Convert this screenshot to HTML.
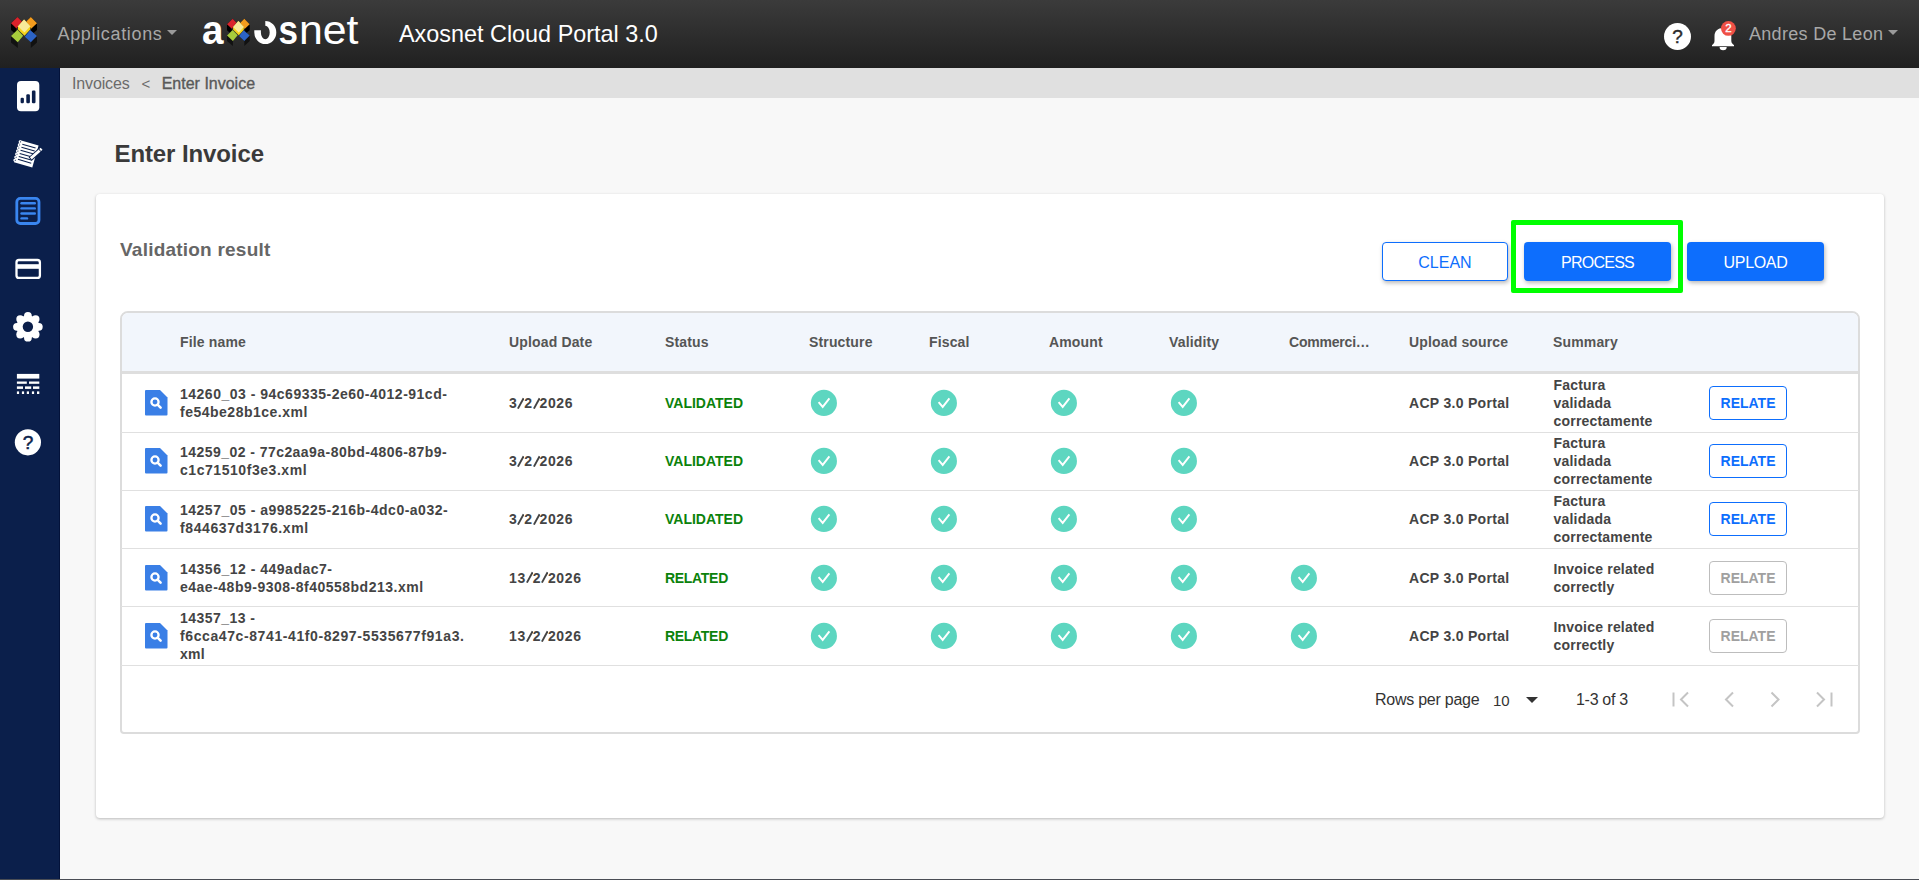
<!DOCTYPE html>
<html><head><meta charset="utf-8">
<style>
*{box-sizing:border-box;margin:0;padding:0}
html,body{width:1919px;height:880px;overflow:hidden}
body{position:relative;background:#f8f8f8;font-family:"Liberation Sans",sans-serif;color:#333}
.a{position:absolute;white-space:nowrap}
#hdr{position:absolute;left:0;top:0;width:1919px;height:68px;background:linear-gradient(#3b3b3b,#202020)}
#side{position:absolute;left:0;top:68px;width:60px;height:812px;background:#0b1f4b}
#crumb{position:absolute;left:60px;top:68px;width:1859px;height:30px;background:#e0e0e0}
#card{position:absolute;left:96px;top:194px;width:1788px;height:624px;background:#fff;border-radius:4px;box-shadow:0 1px 3px rgba(0,0,0,.25)}
.btn{position:absolute;top:242px;height:39px;border-radius:4px;font-size:16px;line-height:41px;text-align:center;box-shadow:1px 2px 4px rgba(0,0,0,.28)}
.bp{background:#0d6efd;color:#fff}
.bo{background:#fff;color:#0d6efd;border:1px solid #0d6efd;line-height:39px}
#tbl{position:absolute;left:121px;top:311px;width:1738px;height:422px;border:1.5px solid #dcdcdc;border-radius:8px;overflow:hidden;background:#fff}
.th{position:absolute;font-size:14px;font-weight:700;color:#555;white-space:nowrap}
.td{position:absolute;font-size:14px;font-weight:700;color:#444;white-space:nowrap;line-height:18px}
.ok{position:absolute;width:26px;height:26px;border-radius:50%;background:#5dd6bf}
.rel{position:absolute;left:1709px;width:78px;height:34px;border:1px solid #0d6efd;border-radius:4px;color:#0d6efd;font-size:14px;font-weight:700;line-height:32px;text-align:center}
.rel.dis{border-color:#bdbdbd;color:#a0a0a0}
.hr{position:absolute;left:121px;width:1738px;height:1px;background:#e0e0e0}
</style></head><body>
<div id="hdr"></div>
<div id="side"></div>
<svg class="a" style="left:0;top:68px" width="60" height="420" viewBox="0 68 60 420">
 <rect x="17" y="81" width="22.3" height="30.3" rx="4" fill="#fff"/>
 <rect x="20.6" y="97.8" width="3.3" height="5.4" rx="1.2" fill="#0b1f4b"/>
 <rect x="26.3" y="94.2" width="3.6" height="9" rx="1.2" fill="#0b1f4b"/>
 <rect x="31.9" y="90.5" width="3.6" height="12.7" rx="1.2" fill="#0b1f4b"/>
 <g transform="rotate(16 26.2 153.8)">
  <rect x="16.8" y="142.4" width="19" height="22.8" fill="#fff"/>
  <g stroke="#0b1f4b" stroke-width="1.05"><line x1="19.8" y1="145.6" x2="33.6" y2="145.6"/><line x1="19.8" y1="148.8" x2="33.6" y2="148.8"/><line x1="19.8" y1="152.0" x2="33.6" y2="152.0"/><line x1="19.8" y1="155.2" x2="33.6" y2="155.2"/><line x1="19.8" y1="158.4" x2="33.6" y2="158.4"/><line x1="19.8" y1="161.4" x2="33.6" y2="161.4"/></g>
  <circle cx="17" cy="143.9" r="1.45" fill="#fff"/><circle cx="17.5" cy="143.9" r="0.55" fill="#0b1f4b"/><circle cx="17" cy="147.1" r="1.45" fill="#fff"/><circle cx="17.5" cy="147.1" r="0.55" fill="#0b1f4b"/><circle cx="17" cy="150.3" r="1.45" fill="#fff"/><circle cx="17.5" cy="150.3" r="0.55" fill="#0b1f4b"/><circle cx="17" cy="153.5" r="1.45" fill="#fff"/><circle cx="17.5" cy="153.5" r="0.55" fill="#0b1f4b"/><circle cx="17" cy="156.7" r="1.45" fill="#fff"/><circle cx="17.5" cy="156.7" r="0.55" fill="#0b1f4b"/><circle cx="17" cy="159.9" r="1.45" fill="#fff"/><circle cx="17.5" cy="159.9" r="0.55" fill="#0b1f4b"/><circle cx="17" cy="163.1" r="1.45" fill="#fff"/><circle cx="17.5" cy="163.1" r="0.55" fill="#0b1f4b"/>
 </g>
 <line x1="30.2" y1="159" x2="41.6" y2="148.8" stroke="#0b1f4b" stroke-width="4.8"/>
 <line x1="30.8" y1="158.4" x2="41.6" y2="148.8" stroke="#fff" stroke-width="2.8"/>
 <line x1="39.6" y1="150.6" x2="40.2" y2="150.1" stroke="#0b1f4b" stroke-width="3" />
 <rect x="16.8" y="198.4" width="22.2" height="25.1" rx="3.5" fill="none" stroke="#3a86f0" stroke-width="2.8"/>
 <g stroke="#3a86f0" stroke-width="2.4" stroke-linecap="round">
  <line x1="21.5" y1="203.3" x2="34.8" y2="203.3"/>
  <line x1="21.5" y1="208.4" x2="34.8" y2="208.4"/>
  <line x1="21.5" y1="213.5" x2="34.8" y2="213.5"/>
  <line x1="21.5" y1="218.4" x2="27" y2="218.4"/>
 </g>
 <rect x="16.5" y="260" width="23.4" height="17.9" rx="2.5" fill="none" stroke="#fff" stroke-width="2.3"/>
 <rect x="16" y="264.2" width="24" height="4.6" fill="#fff"/>
 <circle cx="27.9" cy="326.8" r="11.4" fill="#fff"/><circle cx="27.90" cy="315.90" r="3.9" fill="#fff"/><circle cx="35.61" cy="319.09" r="3.9" fill="#fff"/><circle cx="38.80" cy="326.80" r="3.9" fill="#fff"/><circle cx="35.61" cy="334.51" r="3.9" fill="#fff"/><circle cx="27.90" cy="337.70" r="3.9" fill="#fff"/><circle cx="20.19" cy="334.51" r="3.9" fill="#fff"/><circle cx="17.00" cy="326.80" r="3.9" fill="#fff"/><circle cx="20.19" cy="319.09" r="3.9" fill="#fff"/>
 <circle cx="27.9" cy="326.8" r="5.2" fill="#0b1f4b"/>
 <g fill="#fff">
  <rect x="16.9" y="373.9" width="22.4" height="4.7"/>
  <rect x="16.9" y="381.5" width="9.9" height="2.3"/><rect x="29" y="381.5" width="10.3" height="2.3"/>
  <rect x="16.9" y="386.4" width="6.1" height="2.5"/><rect x="25" y="386.4" width="6.2" height="2.5"/><rect x="33" y="386.4" width="6.3" height="2.5"/>
  <rect x="16.9" y="391.4" width="2.2" height="2.6"/><rect x="21.9" y="391.4" width="2.2" height="2.6"/><rect x="26.8" y="391.4" width="2.2" height="2.6"/><rect x="31.9" y="391.4" width="2.2" height="2.6"/><rect x="37" y="391.4" width="2.3" height="2.6"/>
 </g>
 <circle cx="27.9" cy="442.3" r="13.1" fill="#fff"/>
 <text x="28.1" y="449.2" font-family="Liberation Sans" font-size="19" fill="#0b1f4b" stroke="#0b1f4b" stroke-width="0.5" text-anchor="middle">?</text>
</svg>


<svg class="a" style="left:0;top:0" width="420" height="68" viewBox="0 0 420 68">
 <g transform="translate(11,17) scale(0.26,0.31)">
   <polygon points="0,20.2 25,0 41.9,14.3 21.1,36.8 21.1,58 0,42" fill="#000"/>
   <polygon points="58.6,14.3 76.2,0 100,20.2 100,42 77.5,58 77.5,37.5" fill="#000"/>
   <polygon points="0,61 25,41.2 47.1,60.3 26,81.2 26,100 0,82" fill="#111"/>
   <polygon points="52.9,63.6 73.6,41.9 100,61 100,82 76.2,100 76.2,81.2" fill="#111"/>
   <polygon points="0,20.2 25,0 41.9,14.3 21.1,36.8" fill="#d9232b"/>
   <polygon points="58.6,14.3 76.2,0 100,20.2 77.5,37.5" fill="#f39c1e"/>
   <polygon points="0,61 25,41.2 47.1,60.3 26,81.2" fill="#a7cc3c"/>
   <polygon points="52.9,63.6 73.6,41.9 100,61 76.2,81.2" fill="#2c63c4"/>
   <polygon points="26.9,30.1 50.2,8.1 74,30.1 74,40 51.9,60.3 26.9,40" fill="#f6d41c"/>
   <polygon points="26.9,30.1 50.2,8.1 74,30.1 51.9,50.4" fill="#f7e99a"/>
  </g>
 <g transform="translate(227,18.8) scale(0.227,0.272)">
   <polygon points="0,20.2 25,0 41.9,14.3 21.1,36.8 21.1,58 0,42" fill="#000"/>
   <polygon points="58.6,14.3 76.2,0 100,20.2 100,42 77.5,58 77.5,37.5" fill="#000"/>
   <polygon points="0,61 25,41.2 47.1,60.3 26,81.2 26,100 0,82" fill="#111"/>
   <polygon points="52.9,63.6 73.6,41.9 100,61 100,82 76.2,100 76.2,81.2" fill="#111"/>
   <polygon points="0,20.2 25,0 41.9,14.3 21.1,36.8" fill="#d9232b"/>
   <polygon points="58.6,14.3 76.2,0 100,20.2 77.5,37.5" fill="#f39c1e"/>
   <polygon points="0,61 25,41.2 47.1,60.3 26,81.2" fill="#a7cc3c"/>
   <polygon points="52.9,63.6 73.6,41.9 100,61 76.2,81.2" fill="#2c63c4"/>
   <polygon points="26.9,30.1 50.2,8.1 74,30.1 74,40 51.9,60.3 26.9,40" fill="#f6d41c"/>
   <polygon points="26.9,30.1 50.2,8.1 74,30.1 51.9,50.4" fill="#f7e99a"/>
  </g>
 <text x="202" y="44" font-family="Liberation Sans" font-size="41" font-weight="700" fill="#fff" textLength="21.5" lengthAdjust="spacingAndGlyphs">a</text>
 <path d="M265.3,21 A11,11.5 0 1 1 254.3,32.5 L254.3,30.2 L260.9,30.2 L260.9,32.5 A4.4,6.8 0 1 0 265.3,25.7 Z" fill="#fff"/>
 <text x="278.5" y="44" font-family="Liberation Sans" font-size="41" font-weight="700" fill="#fff" textLength="19.5" lengthAdjust="spacingAndGlyphs">s</text>
 <text x="299" y="44" font-family="Liberation Sans" font-size="41" fill="#fff" textLength="59.5" lengthAdjust="spacingAndGlyphs">net</text>
</svg>
<div class="a" style="left:57.5px;top:19.6px;font-size:18px;line-height:28px;letter-spacing:0.66px;color:#a8a8a8">Applications</div>
<div class="a" style="left:167px;top:30px;width:0;height:0;border-left:5px solid transparent;border-right:5px solid transparent;border-top:5px solid #9a9a9a"></div>
<div class="a" style="left:399px;top:17.6px;font-size:23.4px;line-height:32px;color:#fff">Axosnet Cloud Portal 3.0</div>
<div class="a" style="left:1664px;top:22.5px;width:27px;height:27px;border-radius:50%;background:#fff;color:#2a2a2a;font-size:19px;font-weight:400;line-height:27px;text-align:center;-webkit-text-stroke:0.4px #2a2a2a">?</div>
<svg class="a" style="left:1708px;top:20px" width="34" height="34" viewBox="0 0 34 34">
 <path d="M15,8 C10,8 6.5,11 6.5,16 L6.5,21 C6.5,23 5,24.5 4,25 L4,26.3 L26,26.3 L26,25 C25,24.5 23.3,23 23.3,21 L23.3,16 C23.3,11 20,8 15,8 Z" fill="#fff"/>
 <path d="M11.6,27 A3.55,3.2 0 0 0 18.7,27 Z" fill="#fff"/>
 <circle cx="20.4" cy="8.4" r="7.4" fill="#ef5046"/>
 <text x="20.4" y="12.4" font-family="Liberation Sans" font-size="11.5" fill="#fff" stroke="#fff" stroke-width="0.35" text-anchor="middle">2</text>
</svg>
<div class="a" style="left:1749px;top:19.7px;font-size:18px;line-height:28px;letter-spacing:0.3px;color:#a8a8a8">Andres De Leon</div>
<div class="a" style="left:1888px;top:30px;width:0;height:0;border-left:5px solid transparent;border-right:5px solid transparent;border-top:5px solid #9a9a9a"></div>

<div id="crumb"></div>
<div class="a" style="left:72px;top:74px;font-size:16px;line-height:20px;letter-spacing:-0.15px;color:#6b6b6b">Invoices</div>
<div class="a" style="left:141.5px;top:74px;font-size:15px;line-height:20px;color:#6b6b6b">&lt;</div>
<div class="a" style="left:161.7px;top:74px;font-size:16px;line-height:20px;color:#595959;-webkit-text-stroke:0.35px #595959">Enter Invoice</div>
<div class="a" style="left:114.5px;top:139.5px;font-size:24px;line-height:28px;font-weight:700;letter-spacing:-0.1px;color:#3a3a3a">Enter Invoice</div>
<div id="card"></div>
<div class="a" style="left:120px;top:238.5px;font-size:19px;line-height:22px;font-weight:700;letter-spacing:0.22px;color:#666">Validation result</div>
<div class="btn bo" style="left:1382px;width:126px">CLEAN</div>
<div class="btn bp" style="left:1524px;width:147px;letter-spacing:-0.75px">PROCESS</div>
<div class="btn bp" style="left:1687px;width:137px;letter-spacing:-0.3px">UPLOAD</div>
<div class="a" style="left:1511px;top:220px;width:172px;height:72.6px;border:5px solid #00ff00;border-radius:2px"></div>
<!--TBL-->
<div class="a" style="left:120px;top:310.5px;width:1740px;height:423.5px;border:2px solid #dcdcdc;border-radius:8px 8px 4px 4px;background:#fff;overflow:hidden"><div style="position:absolute;left:0;top:0;width:100%;height:58.5px;background:#f2f6fc"></div><div style="position:absolute;left:0;top:58.5px;width:100%;height:3px;background:#dedede"></div></div>
<div class="a" style="left:180px;top:333.37px;font-size:14px;line-height:18px;font-weight:700;color:#555;letter-spacing:0.15px">File name</div>
<div class="a" style="left:509px;top:333.37px;font-size:14px;line-height:18px;font-weight:700;color:#555;letter-spacing:0.15px">Upload Date</div>
<div class="a" style="left:665px;top:333.37px;font-size:14px;line-height:18px;font-weight:700;color:#555;letter-spacing:0.15px">Status</div>
<div class="a" style="left:809px;top:333.37px;font-size:14px;line-height:18px;font-weight:700;color:#555;letter-spacing:0.15px">Structure</div>
<div class="a" style="left:929px;top:333.37px;font-size:14px;line-height:18px;font-weight:700;color:#555;letter-spacing:0.15px">Fiscal</div>
<div class="a" style="left:1049px;top:333.37px;font-size:14px;line-height:18px;font-weight:700;color:#555;letter-spacing:0.15px">Amount</div>
<div class="a" style="left:1169px;top:333.37px;font-size:14px;line-height:18px;font-weight:700;color:#555;letter-spacing:0.15px">Validity</div>
<div class="a" style="left:1289px;top:333.37px;font-size:14px;line-height:18px;font-weight:700;color:#555;letter-spacing:-0.2px">Commerci…</div>
<div class="a" style="left:1409px;top:333.37px;font-size:14px;line-height:18px;font-weight:700;color:#555;letter-spacing:0.15px">Upload source</div>
<div class="a" style="left:1553px;top:333.37px;font-size:14px;line-height:18px;font-weight:700;color:#555;letter-spacing:0.15px">Summary</div>
<div class="hr" style="top:432px"></div>
<div class="hr" style="top:490px"></div>
<div class="hr" style="top:548px"></div>
<div class="hr" style="top:606px"></div>
<div class="hr" style="top:665px"></div>
<svg class="a" style="left:145px;top:390px" width="23" height="26" viewBox="0 0 23 26"><path d="M1,0 H15 L22.5,7.5 V24.5 Q22.5,25.5 21.5,25.5 H1 Q0,25.5 0,24.5 V1 Q0,0 1,0 Z" fill="#3a7fe6"/><circle cx="10" cy="12" r="3.6" fill="none" stroke="#fff" stroke-width="2.3"/><line x1="12.6" y1="14.6" x2="15.6" y2="17.6" stroke="#fff" stroke-width="2.6" stroke-linecap="round"/></svg>
<div class="a" style="left:180px;top:385.37px;font-size:14px;line-height:18px;font-weight:700;color:#444;letter-spacing:0.5px">14260_03 - 94c69335-2e60-4012-91cd-</div>
<div class="a" style="left:180px;top:403.37px;font-size:14px;line-height:18px;font-weight:700;color:#444;letter-spacing:0.5px">fe54be28b1ce.xml</div>
<div class="a" style="left:509px;top:394.37px;font-size:14px;line-height:18px;font-weight:700;color:#444;letter-spacing:0.6px">3<svg width="7" height="12" style="vertical-align:-0.3px;margin-right:-0.1px" viewBox="0 0 7 12"><line x1="0.9" y1="11.6" x2="6.6" y2="1.2" stroke="#444" stroke-width="1.9"/></svg>2<svg width="7" height="12" style="vertical-align:-0.3px;margin-right:-0.1px" viewBox="0 0 7 12"><line x1="0.9" y1="11.6" x2="6.6" y2="1.2" stroke="#444" stroke-width="1.9"/></svg>2026</div>
<div class="a" style="left:665px;top:394.37px;font-size:14px;line-height:18px;font-weight:700;color:#0b820b;letter-spacing:0px">VALIDATED</div>
<svg class="a" style="left:810px;top:389px" width="28" height="28" viewBox="0 0 28 28"><circle cx="13.9" cy="13.9" r="13.05" fill="#5dd6c0"/><path d="M8.6,13.2 L12.7,17.9 L19.4,9.4" fill="none" stroke="#fff" stroke-width="1.9" stroke-linecap="butt" stroke-linejoin="miter"/></svg>
<svg class="a" style="left:930px;top:389px" width="28" height="28" viewBox="0 0 28 28"><circle cx="13.9" cy="13.9" r="13.05" fill="#5dd6c0"/><path d="M8.6,13.2 L12.7,17.9 L19.4,9.4" fill="none" stroke="#fff" stroke-width="1.9" stroke-linecap="butt" stroke-linejoin="miter"/></svg>
<svg class="a" style="left:1050px;top:389px" width="28" height="28" viewBox="0 0 28 28"><circle cx="13.9" cy="13.9" r="13.05" fill="#5dd6c0"/><path d="M8.6,13.2 L12.7,17.9 L19.4,9.4" fill="none" stroke="#fff" stroke-width="1.9" stroke-linecap="butt" stroke-linejoin="miter"/></svg>
<svg class="a" style="left:1170px;top:389px" width="28" height="28" viewBox="0 0 28 28"><circle cx="13.9" cy="13.9" r="13.05" fill="#5dd6c0"/><path d="M8.6,13.2 L12.7,17.9 L19.4,9.4" fill="none" stroke="#fff" stroke-width="1.9" stroke-linecap="butt" stroke-linejoin="miter"/></svg>
<div class="a" style="left:1409px;top:394.37px;font-size:14px;line-height:18px;font-weight:700;color:#444;letter-spacing:0.3px">ACP 3.0 Portal</div>
<div class="a" style="left:1553.5px;top:376.37px;font-size:14px;line-height:18px;font-weight:700;color:#444;letter-spacing:0.2px">Factura</div>
<div class="a" style="left:1553.5px;top:394.37px;font-size:14px;line-height:18px;font-weight:700;color:#444;letter-spacing:0.2px">validada</div>
<div class="a" style="left:1553.5px;top:412.37px;font-size:14px;line-height:18px;font-weight:700;color:#444;letter-spacing:0.2px">correctamente</div>
<div class="rel" style="top:386px">RELATE</div>
<svg class="a" style="left:145px;top:448px" width="23" height="26" viewBox="0 0 23 26"><path d="M1,0 H15 L22.5,7.5 V24.5 Q22.5,25.5 21.5,25.5 H1 Q0,25.5 0,24.5 V1 Q0,0 1,0 Z" fill="#3a7fe6"/><circle cx="10" cy="12" r="3.6" fill="none" stroke="#fff" stroke-width="2.3"/><line x1="12.6" y1="14.6" x2="15.6" y2="17.6" stroke="#fff" stroke-width="2.6" stroke-linecap="round"/></svg>
<div class="a" style="left:180px;top:443.37px;font-size:14px;line-height:18px;font-weight:700;color:#444;letter-spacing:0.45px">14259_02 - 77c2aa9a-80bd-4806-87b9-</div>
<div class="a" style="left:180px;top:461.37px;font-size:14px;line-height:18px;font-weight:700;color:#444;letter-spacing:0.55px">c1c71510f3e3.xml</div>
<div class="a" style="left:509px;top:452.37px;font-size:14px;line-height:18px;font-weight:700;color:#444;letter-spacing:0.6px">3<svg width="7" height="12" style="vertical-align:-0.3px;margin-right:-0.1px" viewBox="0 0 7 12"><line x1="0.9" y1="11.6" x2="6.6" y2="1.2" stroke="#444" stroke-width="1.9"/></svg>2<svg width="7" height="12" style="vertical-align:-0.3px;margin-right:-0.1px" viewBox="0 0 7 12"><line x1="0.9" y1="11.6" x2="6.6" y2="1.2" stroke="#444" stroke-width="1.9"/></svg>2026</div>
<div class="a" style="left:665px;top:452.37px;font-size:14px;line-height:18px;font-weight:700;color:#0b820b;letter-spacing:0px">VALIDATED</div>
<svg class="a" style="left:810px;top:447px" width="28" height="28" viewBox="0 0 28 28"><circle cx="13.9" cy="13.9" r="13.05" fill="#5dd6c0"/><path d="M8.6,13.2 L12.7,17.9 L19.4,9.4" fill="none" stroke="#fff" stroke-width="1.9" stroke-linecap="butt" stroke-linejoin="miter"/></svg>
<svg class="a" style="left:930px;top:447px" width="28" height="28" viewBox="0 0 28 28"><circle cx="13.9" cy="13.9" r="13.05" fill="#5dd6c0"/><path d="M8.6,13.2 L12.7,17.9 L19.4,9.4" fill="none" stroke="#fff" stroke-width="1.9" stroke-linecap="butt" stroke-linejoin="miter"/></svg>
<svg class="a" style="left:1050px;top:447px" width="28" height="28" viewBox="0 0 28 28"><circle cx="13.9" cy="13.9" r="13.05" fill="#5dd6c0"/><path d="M8.6,13.2 L12.7,17.9 L19.4,9.4" fill="none" stroke="#fff" stroke-width="1.9" stroke-linecap="butt" stroke-linejoin="miter"/></svg>
<svg class="a" style="left:1170px;top:447px" width="28" height="28" viewBox="0 0 28 28"><circle cx="13.9" cy="13.9" r="13.05" fill="#5dd6c0"/><path d="M8.6,13.2 L12.7,17.9 L19.4,9.4" fill="none" stroke="#fff" stroke-width="1.9" stroke-linecap="butt" stroke-linejoin="miter"/></svg>
<div class="a" style="left:1409px;top:452.37px;font-size:14px;line-height:18px;font-weight:700;color:#444;letter-spacing:0.3px">ACP 3.0 Portal</div>
<div class="a" style="left:1553.5px;top:434.37px;font-size:14px;line-height:18px;font-weight:700;color:#444;letter-spacing:0.2px">Factura</div>
<div class="a" style="left:1553.5px;top:452.37px;font-size:14px;line-height:18px;font-weight:700;color:#444;letter-spacing:0.2px">validada</div>
<div class="a" style="left:1553.5px;top:470.37px;font-size:14px;line-height:18px;font-weight:700;color:#444;letter-spacing:0.2px">correctamente</div>
<div class="rel" style="top:444px">RELATE</div>
<svg class="a" style="left:145px;top:506px" width="23" height="26" viewBox="0 0 23 26"><path d="M1,0 H15 L22.5,7.5 V24.5 Q22.5,25.5 21.5,25.5 H1 Q0,25.5 0,24.5 V1 Q0,0 1,0 Z" fill="#3a7fe6"/><circle cx="10" cy="12" r="3.6" fill="none" stroke="#fff" stroke-width="2.3"/><line x1="12.6" y1="14.6" x2="15.6" y2="17.6" stroke="#fff" stroke-width="2.6" stroke-linecap="round"/></svg>
<div class="a" style="left:180px;top:501.37px;font-size:14px;line-height:18px;font-weight:700;color:#444;letter-spacing:0.5px">14257_05 - a9985225-216b-4dc0-a032-</div>
<div class="a" style="left:180px;top:519.37px;font-size:14px;line-height:18px;font-weight:700;color:#444;letter-spacing:0.6px">f844637d3176.xml</div>
<div class="a" style="left:509px;top:510.37px;font-size:14px;line-height:18px;font-weight:700;color:#444;letter-spacing:0.6px">3<svg width="7" height="12" style="vertical-align:-0.3px;margin-right:-0.1px" viewBox="0 0 7 12"><line x1="0.9" y1="11.6" x2="6.6" y2="1.2" stroke="#444" stroke-width="1.9"/></svg>2<svg width="7" height="12" style="vertical-align:-0.3px;margin-right:-0.1px" viewBox="0 0 7 12"><line x1="0.9" y1="11.6" x2="6.6" y2="1.2" stroke="#444" stroke-width="1.9"/></svg>2026</div>
<div class="a" style="left:665px;top:510.37px;font-size:14px;line-height:18px;font-weight:700;color:#0b820b;letter-spacing:0px">VALIDATED</div>
<svg class="a" style="left:810px;top:505px" width="28" height="28" viewBox="0 0 28 28"><circle cx="13.9" cy="13.9" r="13.05" fill="#5dd6c0"/><path d="M8.6,13.2 L12.7,17.9 L19.4,9.4" fill="none" stroke="#fff" stroke-width="1.9" stroke-linecap="butt" stroke-linejoin="miter"/></svg>
<svg class="a" style="left:930px;top:505px" width="28" height="28" viewBox="0 0 28 28"><circle cx="13.9" cy="13.9" r="13.05" fill="#5dd6c0"/><path d="M8.6,13.2 L12.7,17.9 L19.4,9.4" fill="none" stroke="#fff" stroke-width="1.9" stroke-linecap="butt" stroke-linejoin="miter"/></svg>
<svg class="a" style="left:1050px;top:505px" width="28" height="28" viewBox="0 0 28 28"><circle cx="13.9" cy="13.9" r="13.05" fill="#5dd6c0"/><path d="M8.6,13.2 L12.7,17.9 L19.4,9.4" fill="none" stroke="#fff" stroke-width="1.9" stroke-linecap="butt" stroke-linejoin="miter"/></svg>
<svg class="a" style="left:1170px;top:505px" width="28" height="28" viewBox="0 0 28 28"><circle cx="13.9" cy="13.9" r="13.05" fill="#5dd6c0"/><path d="M8.6,13.2 L12.7,17.9 L19.4,9.4" fill="none" stroke="#fff" stroke-width="1.9" stroke-linecap="butt" stroke-linejoin="miter"/></svg>
<div class="a" style="left:1409px;top:510.37px;font-size:14px;line-height:18px;font-weight:700;color:#444;letter-spacing:0.3px">ACP 3.0 Portal</div>
<div class="a" style="left:1553.5px;top:492.37px;font-size:14px;line-height:18px;font-weight:700;color:#444;letter-spacing:0.2px">Factura</div>
<div class="a" style="left:1553.5px;top:510.37px;font-size:14px;line-height:18px;font-weight:700;color:#444;letter-spacing:0.2px">validada</div>
<div class="a" style="left:1553.5px;top:528.37px;font-size:14px;line-height:18px;font-weight:700;color:#444;letter-spacing:0.2px">correctamente</div>
<div class="rel" style="top:502px">RELATE</div>
<svg class="a" style="left:145px;top:564.7px" width="23" height="26" viewBox="0 0 23 26"><path d="M1,0 H15 L22.5,7.5 V24.5 Q22.5,25.5 21.5,25.5 H1 Q0,25.5 0,24.5 V1 Q0,0 1,0 Z" fill="#3a7fe6"/><circle cx="10" cy="12" r="3.6" fill="none" stroke="#fff" stroke-width="2.3"/><line x1="12.6" y1="14.6" x2="15.6" y2="17.6" stroke="#fff" stroke-width="2.6" stroke-linecap="round"/></svg>
<div class="a" style="left:180px;top:560.07px;font-size:14px;line-height:18px;font-weight:700;color:#444;letter-spacing:0.5px">14356_12 - 449adac7-</div>
<div class="a" style="left:180px;top:578.07px;font-size:14px;line-height:18px;font-weight:700;color:#444;letter-spacing:0.5px">e4ae-48b9-9308-8f40558bd213.xml</div>
<div class="a" style="left:509px;top:569.07px;font-size:14px;line-height:18px;font-weight:700;color:#444;letter-spacing:0.6px">13<svg width="7" height="12" style="vertical-align:-0.3px;margin-right:-0.1px" viewBox="0 0 7 12"><line x1="0.9" y1="11.6" x2="6.6" y2="1.2" stroke="#444" stroke-width="1.9"/></svg>2<svg width="7" height="12" style="vertical-align:-0.3px;margin-right:-0.1px" viewBox="0 0 7 12"><line x1="0.9" y1="11.6" x2="6.6" y2="1.2" stroke="#444" stroke-width="1.9"/></svg>2026</div>
<div class="a" style="left:665px;top:569.07px;font-size:14px;line-height:18px;font-weight:700;color:#0b820b;letter-spacing:-0.3px">RELATED</div>
<svg class="a" style="left:810px;top:563.7px" width="28" height="28" viewBox="0 0 28 28"><circle cx="13.9" cy="13.9" r="13.05" fill="#5dd6c0"/><path d="M8.6,13.2 L12.7,17.9 L19.4,9.4" fill="none" stroke="#fff" stroke-width="1.9" stroke-linecap="butt" stroke-linejoin="miter"/></svg>
<svg class="a" style="left:930px;top:563.7px" width="28" height="28" viewBox="0 0 28 28"><circle cx="13.9" cy="13.9" r="13.05" fill="#5dd6c0"/><path d="M8.6,13.2 L12.7,17.9 L19.4,9.4" fill="none" stroke="#fff" stroke-width="1.9" stroke-linecap="butt" stroke-linejoin="miter"/></svg>
<svg class="a" style="left:1050px;top:563.7px" width="28" height="28" viewBox="0 0 28 28"><circle cx="13.9" cy="13.9" r="13.05" fill="#5dd6c0"/><path d="M8.6,13.2 L12.7,17.9 L19.4,9.4" fill="none" stroke="#fff" stroke-width="1.9" stroke-linecap="butt" stroke-linejoin="miter"/></svg>
<svg class="a" style="left:1170px;top:563.7px" width="28" height="28" viewBox="0 0 28 28"><circle cx="13.9" cy="13.9" r="13.05" fill="#5dd6c0"/><path d="M8.6,13.2 L12.7,17.9 L19.4,9.4" fill="none" stroke="#fff" stroke-width="1.9" stroke-linecap="butt" stroke-linejoin="miter"/></svg>
<svg class="a" style="left:1290px;top:563.7px" width="28" height="28" viewBox="0 0 28 28"><circle cx="13.9" cy="13.9" r="13.05" fill="#5dd6c0"/><path d="M8.6,13.2 L12.7,17.9 L19.4,9.4" fill="none" stroke="#fff" stroke-width="1.9" stroke-linecap="butt" stroke-linejoin="miter"/></svg>
<div class="a" style="left:1409px;top:569.07px;font-size:14px;line-height:18px;font-weight:700;color:#444;letter-spacing:0.3px">ACP 3.0 Portal</div>
<div class="a" style="left:1553.5px;top:560.07px;font-size:14px;line-height:18px;font-weight:700;color:#444;letter-spacing:0.2px">Invoice related</div>
<div class="a" style="left:1553.5px;top:578.07px;font-size:14px;line-height:18px;font-weight:700;color:#444;letter-spacing:0.2px">correctly</div>
<div class="rel dis" style="top:560.7px">RELATE</div>
<svg class="a" style="left:145px;top:623px" width="23" height="26" viewBox="0 0 23 26"><path d="M1,0 H15 L22.5,7.5 V24.5 Q22.5,25.5 21.5,25.5 H1 Q0,25.5 0,24.5 V1 Q0,0 1,0 Z" fill="#3a7fe6"/><circle cx="10" cy="12" r="3.6" fill="none" stroke="#fff" stroke-width="2.3"/><line x1="12.6" y1="14.6" x2="15.6" y2="17.6" stroke="#fff" stroke-width="2.6" stroke-linecap="round"/></svg>
<div class="a" style="left:180px;top:609.37px;font-size:14px;line-height:18px;font-weight:700;color:#444;letter-spacing:0.45px">14357_13 -</div>
<div class="a" style="left:180px;top:627.37px;font-size:14px;line-height:18px;font-weight:700;color:#444;letter-spacing:0.6px">f6cca47c-8741-41f0-8297-5535677f91a3.</div>
<div class="a" style="left:180px;top:645.37px;font-size:14px;line-height:18px;font-weight:700;color:#444;letter-spacing:0.2px">xml</div>
<div class="a" style="left:509px;top:627.37px;font-size:14px;line-height:18px;font-weight:700;color:#444;letter-spacing:0.6px">13<svg width="7" height="12" style="vertical-align:-0.3px;margin-right:-0.1px" viewBox="0 0 7 12"><line x1="0.9" y1="11.6" x2="6.6" y2="1.2" stroke="#444" stroke-width="1.9"/></svg>2<svg width="7" height="12" style="vertical-align:-0.3px;margin-right:-0.1px" viewBox="0 0 7 12"><line x1="0.9" y1="11.6" x2="6.6" y2="1.2" stroke="#444" stroke-width="1.9"/></svg>2026</div>
<div class="a" style="left:665px;top:627.37px;font-size:14px;line-height:18px;font-weight:700;color:#0b820b;letter-spacing:-0.3px">RELATED</div>
<svg class="a" style="left:810px;top:622px" width="28" height="28" viewBox="0 0 28 28"><circle cx="13.9" cy="13.9" r="13.05" fill="#5dd6c0"/><path d="M8.6,13.2 L12.7,17.9 L19.4,9.4" fill="none" stroke="#fff" stroke-width="1.9" stroke-linecap="butt" stroke-linejoin="miter"/></svg>
<svg class="a" style="left:930px;top:622px" width="28" height="28" viewBox="0 0 28 28"><circle cx="13.9" cy="13.9" r="13.05" fill="#5dd6c0"/><path d="M8.6,13.2 L12.7,17.9 L19.4,9.4" fill="none" stroke="#fff" stroke-width="1.9" stroke-linecap="butt" stroke-linejoin="miter"/></svg>
<svg class="a" style="left:1050px;top:622px" width="28" height="28" viewBox="0 0 28 28"><circle cx="13.9" cy="13.9" r="13.05" fill="#5dd6c0"/><path d="M8.6,13.2 L12.7,17.9 L19.4,9.4" fill="none" stroke="#fff" stroke-width="1.9" stroke-linecap="butt" stroke-linejoin="miter"/></svg>
<svg class="a" style="left:1170px;top:622px" width="28" height="28" viewBox="0 0 28 28"><circle cx="13.9" cy="13.9" r="13.05" fill="#5dd6c0"/><path d="M8.6,13.2 L12.7,17.9 L19.4,9.4" fill="none" stroke="#fff" stroke-width="1.9" stroke-linecap="butt" stroke-linejoin="miter"/></svg>
<svg class="a" style="left:1290px;top:622px" width="28" height="28" viewBox="0 0 28 28"><circle cx="13.9" cy="13.9" r="13.05" fill="#5dd6c0"/><path d="M8.6,13.2 L12.7,17.9 L19.4,9.4" fill="none" stroke="#fff" stroke-width="1.9" stroke-linecap="butt" stroke-linejoin="miter"/></svg>
<div class="a" style="left:1409px;top:627.37px;font-size:14px;line-height:18px;font-weight:700;color:#444;letter-spacing:0.3px">ACP 3.0 Portal</div>
<div class="a" style="left:1553.5px;top:618.37px;font-size:14px;line-height:18px;font-weight:700;color:#444;letter-spacing:0.2px">Invoice related</div>
<div class="a" style="left:1553.5px;top:636.37px;font-size:14px;line-height:18px;font-weight:700;color:#444;letter-spacing:0.2px">correctly</div>
<div class="rel dis" style="top:619px">RELATE</div>
<div class="a" style="left:1375px;top:688.71px;font-size:16px;line-height:21px;font-weight:400;color:#333;letter-spacing:-0.25px">Rows per page</div>
<div class="a" style="left:1493px;top:691.04px;font-size:15px;line-height:20px;font-weight:400;color:#333;letter-spacing:0px">10</div>
<div class="a" style="left:1525.5px;top:697px;width:0;height:0;border-left:6px solid transparent;border-right:6px solid transparent;border-top:6px solid #333"></div>
<div class="a" style="left:1576px;top:688.71px;font-size:16px;line-height:21px;font-weight:400;color:#333;letter-spacing:-0.3px">1-3 of 3</div>
<svg class="a" style="left:1660px;top:685px" width="185" height="30" viewBox="1660 685 185 30">
<g fill="none" stroke="#c4c4c4" stroke-width="2">
<line x1="1673.5" y1="692.5" x2="1673.5" y2="706.5"/>
<polyline points="1688,692.5 1681,699.5 1688,706.5"/>
<polyline points="1733,692.5 1726,699.5 1733,706.5"/>
<polyline points="1771.5,692.5 1778.5,699.5 1771.5,706.5"/>
<polyline points="1817,692.5 1824,699.5 1817,706.5"/>
<line x1="1831.5" y1="692.5" x2="1831.5" y2="706.5"/>
</g></svg>
<!--/TBL-->

<div id="botline" class="a" style="left:0;top:879px;width:1919px;height:1px;background:#4a4d55"></div>
<div class="a" style="left:59px;top:68px;width:1px;height:811px;background:#03123a"></div>
</body></html>
